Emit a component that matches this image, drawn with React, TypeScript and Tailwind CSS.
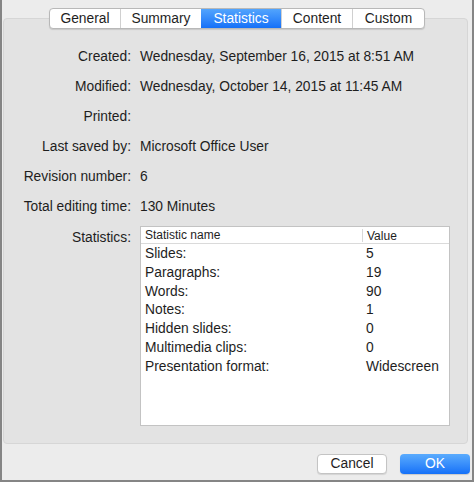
import React, { useState } from 'react';

const TABS = ['General', 'Summary', 'Statistics', 'Content', 'Custom'] as const;

// widths of the segmented control cells
const TAB_WIDTHS: Record<(typeof TABS)[number], string> = {
  General: 'w-[70px]',
  Summary: 'w-[81px]',
  Statistics: 'w-[80px]',
  Content: 'w-[71px]',
  Custom: 'w-[72px]',
};

const FIELDS = [
  { label: 'Created:', value: 'Wednesday, September 16, 2015 at 8:51 AM' },
  { label: 'Modified:', value: 'Wednesday, October 14, 2015 at 11:45 AM' },
  { label: 'Printed:', value: '' },
  { label: 'Last saved by:', value: 'Microsoft Office User' },
  { label: 'Revision number:', value: '6' },
  { label: 'Total editing time:', value: '130 Minutes' },
];

const STATS = [
  ['Slides:', '5'],
  ['Paragraphs:', '19'],
  ['Words:', '90'],
  ['Notes:', '1'],
  ['Hidden slides:', '0'],
  ['Multimedia clips:', '0'],
  ['Presentation format:', 'Widescreen'],
];

export default function App() {
  const [tab, setTab] = useState<(typeof TABS)[number]>('Statistics');

  return (
    <div className="flex h-[482px] w-[474px] flex-col border-x-2 border-b-2 border-[#858585] bg-[#ececec] font-['Liberation_Sans',Arial,sans-serif] text-[13.8px] text-[#1e1e1e]">
      <div className="relative z-10 mx-auto mt-[8px] flex h-[21px] overflow-hidden rounded-[4px] border border-[#b8b8b8] bg-white shadow-[0_1px_1px_rgba(0,0,0,0.12)]">
        {TABS.map((t, i) => (
          <button
            key={t}
            type="button"
            onClick={() => setTab(t)}
            className={`${TAB_WIDTHS[t]} flex items-center justify-center pt-[1px] leading-none ${i > 0 ? 'border-l border-[#d0d0d0]' : ''} ${
              tab === t ? 'border-l-0 bg-gradient-to-b from-[#52a4fd] to-[#1470f8] text-white' : 'text-[#1e1e1e]'
            }`}
          >
            {t}
          </button>
        ))}
      </div>

      <div className="mt-[-11px] ml-[1px] mr-[4px] flex h-[426px] flex-col rounded-[4px] border border-[#d6d6d6] bg-[#e3e3e3] pt-[23px]">
        <div className="grid grid-cols-[127px_1fr] gap-x-[9px]">
          {FIELDS.map((f) => (
            <React.Fragment key={f.label}>
              <div className="flex h-[30px] items-center justify-end whitespace-nowrap">{f.label}</div>
              <div className="flex h-[30px] items-center whitespace-nowrap">{f.value}</div>
            </React.Fragment>
          ))}
          <div className="pt-[6px] text-right">Statistics:</div>
          <div className="mt-[4px] mr-[17px] h-[200px] border border-[#c3c3c3] bg-white">
            <div className="flex h-[17px] items-center border-b border-[#dadada] text-[12px] leading-none">
              <div className="w-[221px] pl-[4px]">Statistic name</div>
              <div className="h-[13px] border-l border-[#d8d8d8] pl-[4px] pt-[1px]">Value</div>
            </div>
            <div className="pt-[1px]">
              {STATS.map(([name, value]) => (
                <div key={name} className="flex h-[18.8px] items-center">
                  <div className="w-[221px] pl-[4px]">{name}</div>
                  <div className="pl-[4px]">{value}</div>
                </div>
              ))}
            </div>
          </div>
        </div>
      </div>

      <div className="mt-[10px] flex justify-end gap-[13px] pr-[2px]">
        <button
          type="button"
          className="flex h-[20px] w-[70px] items-center justify-center rounded-[4px] border border-[#c4c4c4] bg-white leading-none shadow-[0_1px_1px_rgba(0,0,0,0.1)]"
        >
          Cancel
        </button>
        <button
          type="button"
          className="flex h-[20px] w-[70px] items-center justify-center rounded-[4px] bg-gradient-to-b from-[#5aabfd] to-[#1470f8] leading-none text-white shadow-[0_1px_1px_rgba(0,0,0,0.15)]"
        >
          OK
        </button>
      </div>
    </div>
  );
}
